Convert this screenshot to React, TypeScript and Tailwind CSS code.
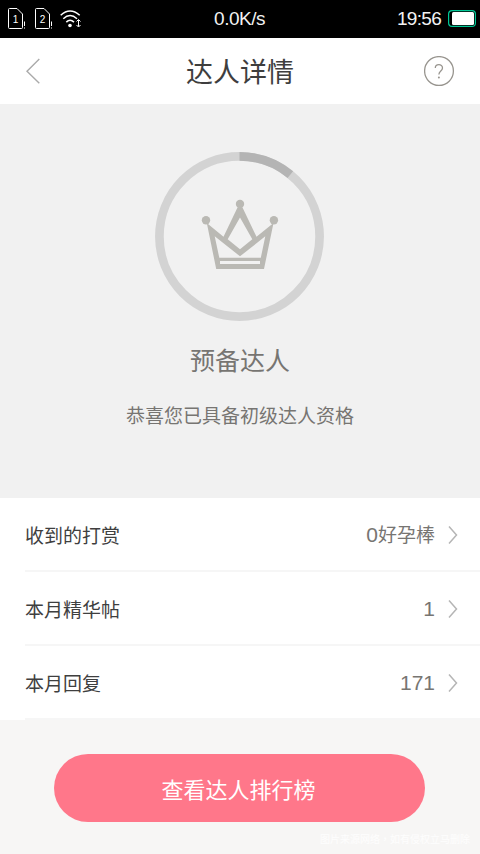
const rows = [
  { label: '收到的打赏', count: '0', unit: '好孕棒' },
  { label: '本月精华帖', count: '1', unit: '' },
  { label: '本月回复', count: '171', unit: '' },
];

function SimIcon({ slot }: { slot: string }) {
  return (
    <svg width="19" height="24" viewBox="0 0 19 24" fill="none" stroke="#fff">
      <path d="M15.5 12V7L10 1.5H2.5Q1.5 1.5 1.5 2.5V20.5Q1.5 21.5 2.5 21.5H14.5Q15.5 21.5 15.5 20.5V12" />
      <path d="M17.5 14.5V19M17.5 20.5V21.5" />
      <text x="8.5" y="16" fill="#fff" stroke="none" fontSize="10" textAnchor="middle" fontFamily="Liberation Sans, sans-serif">
        {slot}
      </text>
    </svg>
  );
}

function WifiIcon() {
  return (
    <svg width="22" height="20" viewBox="0 0 22 20" fill="none" stroke="#fff" strokeWidth="1.5">
      <path d="M.7 6.2Q10 -2.2 19.7 6.2M3.3 9.7Q10 3.3 17 9.7M6.3 13.1Q10 9.4 14 13.1" />
      <circle cx="10" cy="16.5" r="1.8" fill="#fff" stroke="none" />
      <path d="M18.5 11V17.5M16.5 12.5L18.5 10.5L20.5 12.5M16.5 16L18.5 18L20.5 16" strokeWidth="1" />
    </svg>
  );
}

function StatusBar() {
  return (
    <div className="grid h-[38px] grid-cols-[1fr_auto_1fr] items-center bg-black pr-[4px] pl-[7px] text-[19px] text-[#f2f2f2]">
      <div className="flex items-center">
        <SimIcon slot="1" />
        <span className="w-[8px]" />
        <SimIcon slot="2" />
        <span className="w-[7px]" />
        <WifiIcon />
      </div>
      <span className="pt-px pr-[4px] tracking-[-0.5px]">0.0K/s</span>
      <div className="flex items-center justify-end gap-[7px]">
        <span className="pt-px tracking-[-0.7px]">19:56</span>
        <svg width="28" height="18" viewBox="0 0 28 18">
          <rect x=".6" y=".6" width="26.8" height="15.8" rx="3.5" fill="none" stroke="#00c896" strokeWidth="1.2" />
          <rect x="4" y="2" width="22" height="13" rx="1.5" fill="#fff" />
        </svg>
      </div>
    </div>
  );
}

function Header() {
  return (
    <header className="flex h-[66px] items-center justify-between bg-white px-[25px]">
      <svg width="31" height="28" viewBox="0 0 31 28" fill="none" stroke="#aaa" strokeWidth="1.4">
        <path d="M14.3 2L2 14.2L14.3 26.2" />
      </svg>
      <h1 className="pt-[3px] text-[27px] leading-[40px] text-[#3e3e3e]">达人详情</h1>
      <svg width="31" height="31" viewBox="0 0 31 31" fill="none" stroke="#98958f" strokeWidth="1.3">
        <circle cx="15" cy="15" r="14.4" />
        <path d="M11.3 12C11.3 7.6 18.5 7.6 18.5 11.9C18.5 14.8 14.9 15.1 14.9 18.4" />
        <circle cx="14.9" cy="21.4" r="1" fill="#98958f" stroke="none" />
      </svg>
    </header>
  );
}

function LevelBadge() {
  return (
    <svg width="170" height="170" viewBox="0 0 170 170" fill="none">
      <circle cx="84.5" cy="84.5" r="80.1" stroke="#d3d3d3" strokeWidth="8.7" />
      <circle
        cx="84.5"
        cy="84.5"
        r="80.1"
        stroke="#b4b4b4"
        strokeWidth="8.7"
        pathLength="360"
        strokeDasharray="39.4 320.6"
        transform="rotate(-90 84.5 84.5)"
      />
      <g fill="#bab9b4">
        <circle cx="51" cy="68.3" r="4.2" />
        <circle cx="85" cy="52" r="4.2" />
        <circle cx="118.9" cy="68.3" r="4.2" />
        <path
          fillRule="evenodd"
          d="M51.8 71L68.5 84.8L82.5 55.5H87.5L101.5 84.8L118.5 71L109 117H61.2ZM59.7 84.3L64.3 105.8H105.8L110.3 84.3L85 104.3ZM85 65.5L72.7 87.2L85 97.3L97.3 87.2ZM65 109V112H105V109Z"
        />
      </g>
    </svg>
  );
}

function StatRow({ label, count, unit }: { label: string; count: string; unit: string }) {
  return (
    <li className="flex h-[74px] pl-[25px]">
      <div className="flex flex-1 items-center border-b-2 border-[#f6f6f6] pt-[2px] pr-[22px] text-[19px]">
        <span className="pt-[4px] text-[#3f3f3f]">{label}</span>
        <span className="ml-auto flex items-center pt-[2px] text-[#777572]">
          <span className="pb-[2px] text-[21px]">{count}</span>
          {unit}
        </span>
        <svg className="ml-[13px]" width="10" height="20" viewBox="0 0 10 20" fill="none" stroke="#b5b5b5" strokeWidth="1.5">
          <path d="M1 1.5L8.5 10L1 18.5" />
        </svg>
      </div>
    </li>
  );
}

export default function App() {
  return (
    <div className="flex h-[854px] w-[480px] flex-col overflow-hidden bg-[#f7f6f5] font-['Liberation_Sans','Noto_Sans_CJK_SC',sans-serif]">
      <StatusBar />
      <Header />
      <section className="flex h-[394px] flex-col items-center bg-[#f1f1f1] pt-[48px]">
        <LevelBadge />
        <h2 className="mt-[21px] text-[25px] leading-[36px] text-[#777572]">预备达人</h2>
        <p className="mt-[24px] text-[19px] leading-[28px] text-[#777572]">恭喜您已具备初级达人资格</p>
      </section>
      <ul className="bg-white">
        {rows.map((row) => (
          <StatRow key={row.label} {...row} />
        ))}
      </ul>
      <button className="mt-[34px] ml-[54px] h-[68px] w-[371px] shrink-0 rounded-full bg-[#ff778a] pt-[4px] pr-[2px] text-[22px] text-white">
        查看达人排行榜
      </button>
      <p className="mt-[9px] mr-[10px] text-right text-[10px] leading-[16px] text-white/80">
        图片来源网络<span className="font-['Noto_Sans_CJK_TC',sans-serif]">，</span>如有侵权立马删除
      </p>
    </div>
  );
}
